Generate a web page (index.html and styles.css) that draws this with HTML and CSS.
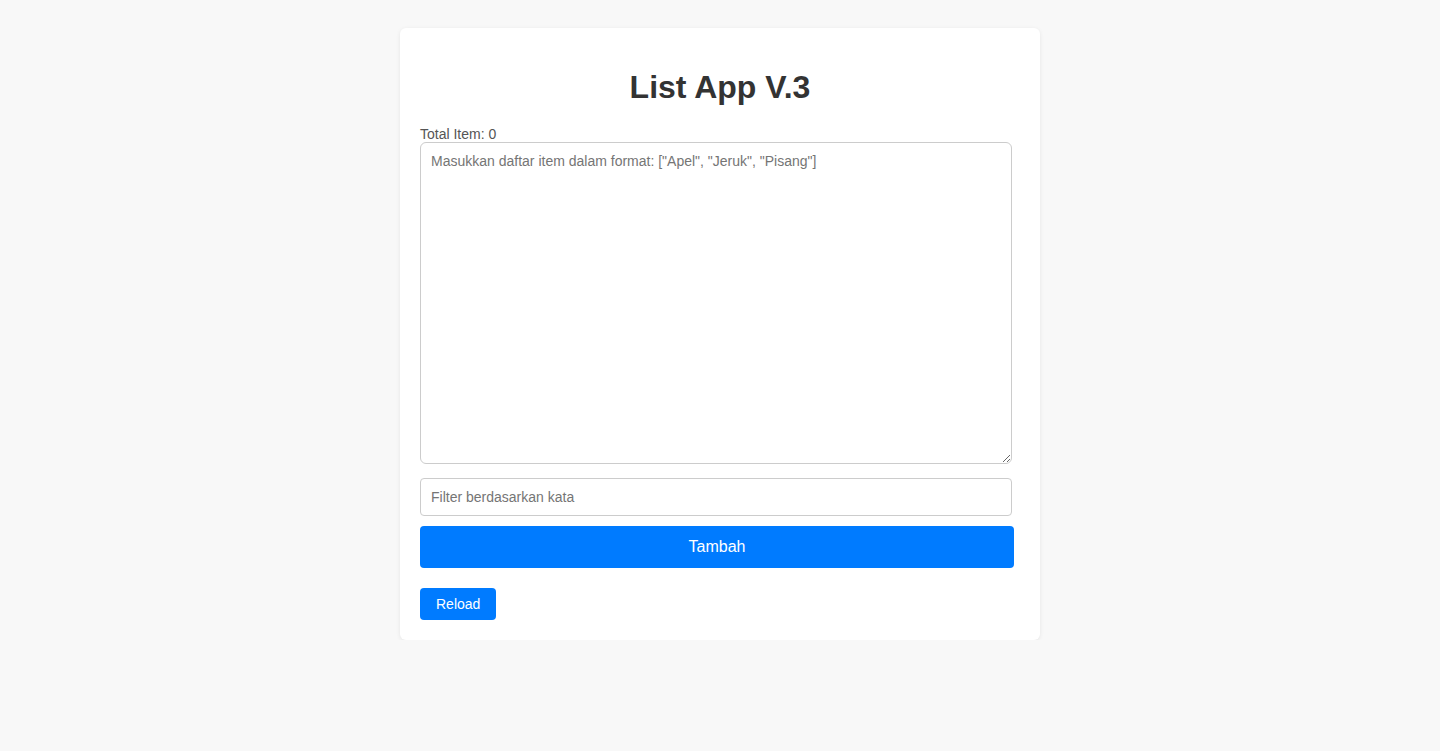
FILE: index.html
```html
<!DOCTYPE html>
<html>
<head>
<meta charset="utf-8">
<link rel="stylesheet" href="styles.css">
</head>
<body>
<div class="card">
  <h1 class="title">List App V.3</h1>
  <div class="total">Total Item: 0</div>
  <textarea class="list-input" placeholder='Masukkan daftar item dalam format: ["Apel", "Jeruk", "Pisang"]'></textarea>
  <input class="filter" type="text" placeholder="Filter berdasarkan kata">
  <button class="btn-add">Tambah</button>
  <button class="btn-reload">Reload</button>
</div>
</body>
</html>
```
FILE: styles.css
```css
html, body {
  margin: 0;
  padding: 0;
  background: #f8f8f8;
  font-family: "Liberation Sans", Arial, sans-serif;
}
.card {
  width: 640px;
  box-sizing: border-box;
  margin: 28px auto 0;
  background: #fff;
  border-radius: 6px;
  box-shadow: 0 1px 4px rgba(0,0,0,0.08);
  padding: 20px;
  display: flex;
  flex-direction: column;
  align-items: flex-start;
}
.title {
  align-self: stretch;
  text-align: center;
  font-size: 32px;
  font-weight: bold;
  color: #333;
  margin: 21px 0 20px;
  line-height: 37px;
}
.total {
  font-size: 14px;
  color: #555;
  line-height: 16px;
}
.list-input {
  box-sizing: border-box;
  width: 592px;
  height: 322px;
  border: 1px solid #ccc;
  border-radius: 6px;
  padding: 10px;
  font-family: "Liberation Sans", Arial, sans-serif;
  font-size: 14px;
  color: #333;
  margin: 0;
  resize: both;
}
.list-input::placeholder, .filter::placeholder {
  color: #757575;
}
.filter {
  box-sizing: border-box;
  width: 592px;
  height: 38px;
  margin: 14px 0 0;
  border: 1px solid #ccc;
  border-radius: 4px;
  padding: 0 10px;
  font-family: "Liberation Sans", Arial, sans-serif;
  font-size: 14px;
}
.btn-add {
  width: 594px;
  height: 42px;
  margin-top: 10px;
  background: #007bff;
  color: #fff;
  border: none;
  border-radius: 4px;
  font-family: "Liberation Sans", Arial, sans-serif;
  font-size: 16px;
}
.btn-reload {
  margin-top: 20px;
  height: 32px;
  padding: 0 16px;
  background: #007bff;
  color: #fff;
  border: none;
  border-radius: 4px;
  font-family: "Liberation Sans", Arial, sans-serif;
  font-size: 14px;
}
```
